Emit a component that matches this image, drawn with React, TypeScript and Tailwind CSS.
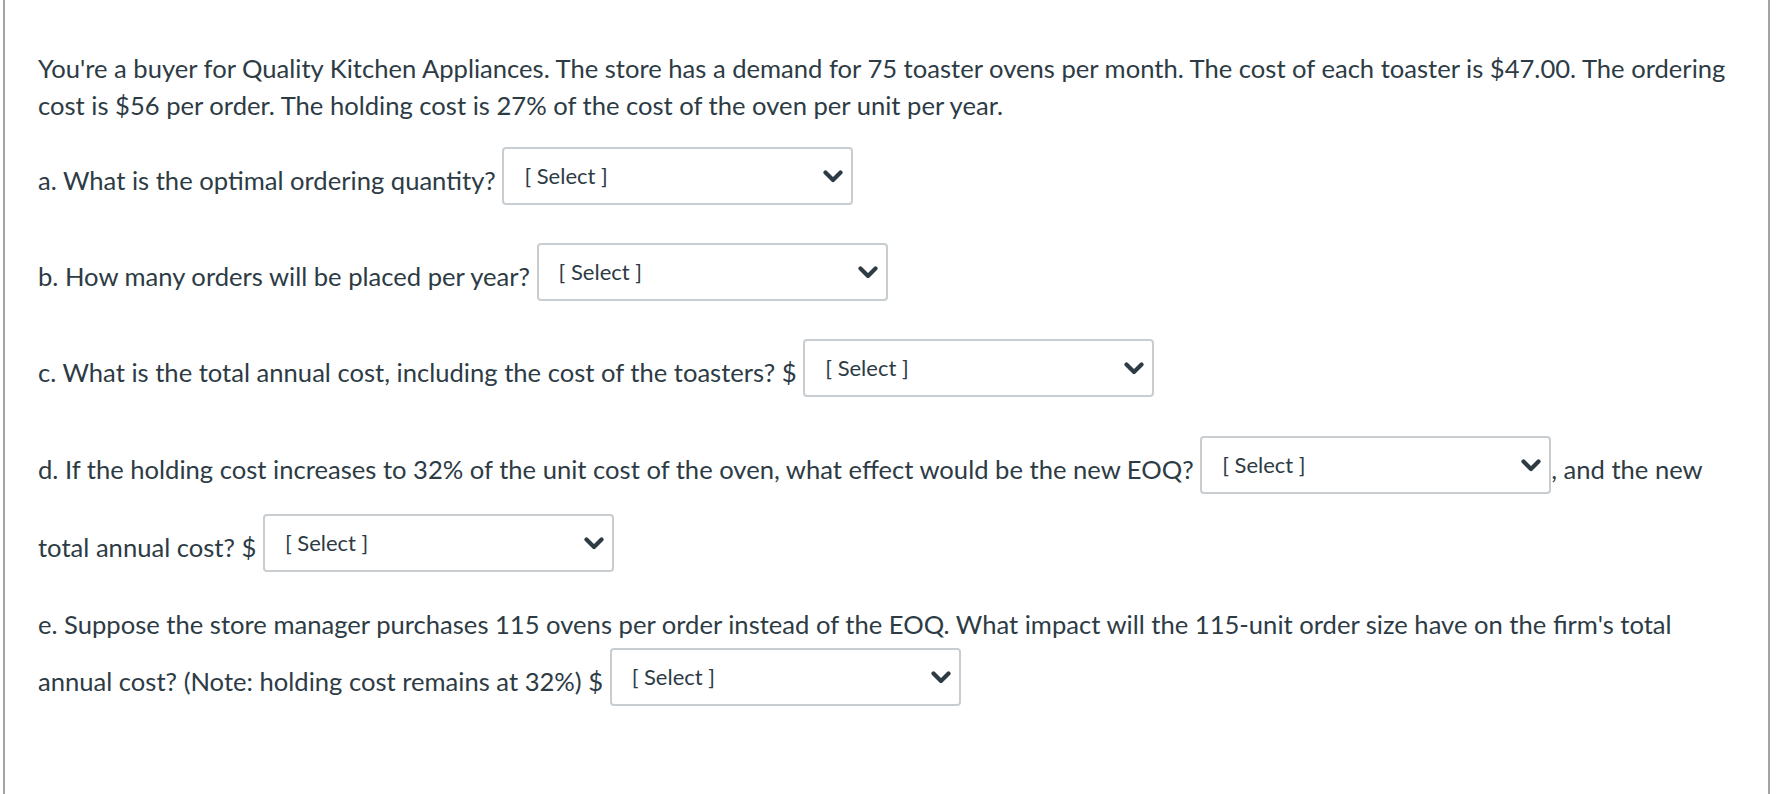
import React from 'react';

function FakeSelect({ top = 'mt-[3px]' }: { top?: string }) {
  return (
    <span className={`inline-flex align-[6px] items-center justify-between w-[351px] h-[58px] ${top} mb-[17px] pl-[20px] pr-[8px] border-2 border-[#c7cdd1] rounded-[4px] bg-white text-[22px] leading-[30px] text-[#2d3b45]`}>
      <span>[ Select ]</span>
      <svg width="20" height="13" viewBox="0 0 20 13" className="shrink-0">
        <path d="M2.5 2.5 L10 10 L17.5 2.5" fill="none" stroke="#2d3b45" strokeWidth="4.2" strokeLinecap="round" strokeLinejoin="round" />
      </svg>
    </span>
  );
}

export default function App() {
  const para = "mb-[18px] whitespace-nowrap";

  return (
    <div className="min-h-[794px] bg-white">
      <div className="ml-[3px] w-[1767px] h-[794px] border-x-2 border-[#a3a3a3] pl-[33px] pt-[50px] text-[25.6px] leading-[37px] text-[#2d3b45] [font-family:Lato,'Liberation_Sans',sans-serif]">
        <p className="mb-[20px] whitespace-nowrap">
          You're a buyer for Quality Kitchen Appliances. The store has a demand for 75 toaster ovens per month. The cost of each toaster is $47.00. The ordering
          <br />
          cost is $56 per order. The holding cost is 27% of the cost of the oven per unit per year.
        </p>
        <p className={para}>
          a. What is the optimal ordering quantity? <FakeSelect />
        </p>
        <p className={para}>
          b. How many orders will be placed per year? <FakeSelect />
        </p>
        <p className="mb-[19px] whitespace-nowrap">
          c. What is the total annual cost, including the cost of the toasters? $ <FakeSelect />
        </p>
        <p className="mb-[17px] whitespace-nowrap">
          d. If the holding cost increases to 32% of the unit cost of the oven, what effect would be the new EOQ? <FakeSelect />, and the new
          <br />
          total annual cost? $ <FakeSelect />
        </p>
        <p className={para}>
          e. Suppose the store manager purchases 115 ovens per order instead of the EOQ. What impact will the 115-unit order size have on the firm's total
          <br />
          annual cost? (Note: holding cost remains at 32%) $ <FakeSelect top="mt-[5px]" />
        </p>
      </div>
    </div>
  );
}
